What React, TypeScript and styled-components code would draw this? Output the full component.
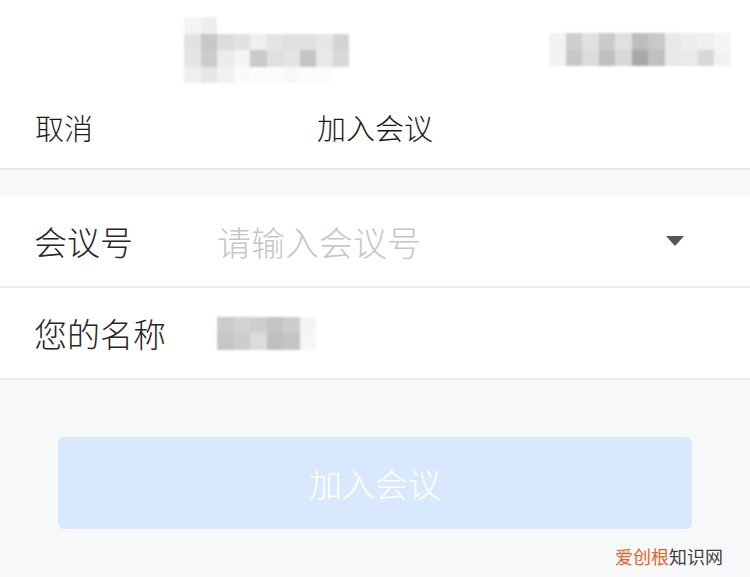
import React from 'react';
import styled, { createGlobalStyle } from 'styled-components';

const GlobalStyle = createGlobalStyle`
  html, body {
    margin: 0;
    padding: 0;
    background: #f7f8fa;
  }
  body {
    font-family: "Noto Sans CJK SC", "Noto Sans", sans-serif;
    color: #1d1d1d;
  }
`;

const Page = styled.div`
  position: relative;
  width: 750px;
  height: 577px;
  overflow: hidden;
  background: #f7f8fa;
`;

const Header = styled.div`
  background: #fff;
  border-bottom: 2px solid #e9e9eb;
`;

const StatusBar = styled.div`
  height: 86px;
  display: flex;
  align-items: flex-start;
  padding-top: 17px;
  box-sizing: border-box;
`;

const Mosaic = styled.div<{ $cols: number; $left: number; $top: number }>`
  display: grid;
  grid-template-columns: repeat(${(p) => p.$cols}, 16.5px);
  grid-auto-rows: 16.5px;
  margin-left: ${(p) => p.$left}px;
  margin-top: ${(p) => p.$top}px;
  filter: blur(1.2px);
`;

const Tile = styled.span<{ $c: string }>`
  background: ${(p) => p.$c};
`;

const NavBar = styled.div`
  height: 82px;
  display: grid;
  grid-template-columns: 1fr auto 1fr;
  align-items: center;
  padding: 0 35px;
  font-size: 29px;
  font-weight: 300;
  color: #1a1a1a;
`;

const NavCancel = styled.span`
  justify-self: start;
`;

const NavTitle = styled.span`
  justify-self: center;
`;

const Spacer = styled.div`
  height: 26px;
`;

const Form = styled.div`
  background: #fff;
`;

const Row = styled.div`
  height: 90px;
  display: grid;
  grid-template-columns: 183px 1fr auto;
  align-items: center;
  padding: 0 66px 0 34px;
  border-bottom: 2px solid #ececee;
  font-size: 33px;
  font-weight: 300;
`;

const Label = styled.span`
  color: #262626;
`;

const Input = styled.input`
  border: none;
  outline: none;
  padding: 0;
  background: transparent;
  font-family: inherit;
  font-weight: 300;
  font-size: 34px;
  color: #262626;
  &::placeholder {
    color: #c6c6c6;
  }
`;

const Caret = styled.span`
  width: 0;
  height: 0;
  border-left: 9px solid transparent;
  border-right: 9px solid transparent;
  border-top: 10px solid #555;
`;

const JoinButton = styled.button`
  display: block;
  margin: 57px 58px 0;
  width: 634px;
  height: 92px;
  border: none;
  border-radius: 6px;
  background: #d8e8fd;
  color: #fff;
  font-family: inherit;
  font-weight: 300;
  font-size: 33px;
`;

const Watermark = styled.div`
  position: absolute;
  right: 27px;
  bottom: 8px;
  font-size: 18px;
  color: #3f3f3f;
`;

const Brand = styled.span`
  color: #e0652b;
`;

const statusLeft = [
  ['#f4f4f4', '#eeeeee', '#fff', '#fff', '#fff', '#fff', '#fff', '#fff', '#fff', '#fff'],
  ['#e2e2e2', '#c8c8c8', '#dcdcdc', '#e2e2e2', '#efefef', '#e4e4e4', '#e0e0e0', '#e0e0e0', '#e6e6e6', '#d4d4d4'],
  ['#e4e4e4', '#cbcbcb', '#ebebeb', '#f4f4f4', '#cacaca', '#e0e0e0', '#e4e4e4', '#c4c4c4', '#e8e8e8', '#d8d8d8'],
  ['#efefef', '#e6e6e6', '#f1f1f1', '#fafafa', '#fcfcfc', '#fcfcfc', '#f8f8f8', '#fcfcfc', '#fcfcfc', '#fff'],
];

const statusRight = [
  ['#f2f2f2', '#cfcfcf', '#e0e0e0', '#cacaca', '#e0e0e0', '#bdbdbd', '#c8c8c8', '#e8e8e8', '#eeeeee', '#f0f0f0', '#f5f5f5'],
  ['#f2f2f2', '#c8c8c8', '#dcdcdc', '#c0c0c0', '#d8d8d8', '#a8a8a8', '#c0c0c0', '#e8e8e8', '#eaeaea', '#d8d8d8', '#f2f2f2'],
];

const nameTiles = [
  ['#cbcbcb', '#d3d3d3', '#cfcfcf', '#c4c4c4', '#cdcdcd', '#f4f4f4'],
  ['#c6c6c6', '#cdcdcd', '#dcdcdc', '#bfbfbf', '#c4c4c4', '#f6f6f6'],
];

function Blur({ rows, left, top }: { rows: string[][]; left: number; top: number }) {
  return (
    <Mosaic $cols={rows[0].length} $left={left} $top={top}>
      {rows.flat().map((c, i) => (
        <Tile key={i} $c={c} />
      ))}
    </Mosaic>
  );
}

export default function App() {
  return (
    <Page>
      <GlobalStyle />
      <Header>
        <StatusBar>
          <Blur rows={statusLeft} left={184} top={0} />
          <Blur rows={statusRight} left={200} top={16} />
        </StatusBar>
        <NavBar>
          <NavCancel>取消</NavCancel>
          <NavTitle>加入会议</NavTitle>
          <span />
        </NavBar>
      </Header>
      <Spacer />
      <Form>
        <Row>
          <Label>会议号</Label>
          <Input placeholder="请输入会议号" />
          <Caret />
        </Row>
        <Row>
          <Label>您的名称</Label>
          <Blur rows={nameTiles} left={0} top={0} />
          <span />
        </Row>
      </Form>
      <JoinButton>加入会议</JoinButton>
      <Watermark>
        <Brand>爱创根</Brand>知识网
      </Watermark>
    </Page>
  );
}
